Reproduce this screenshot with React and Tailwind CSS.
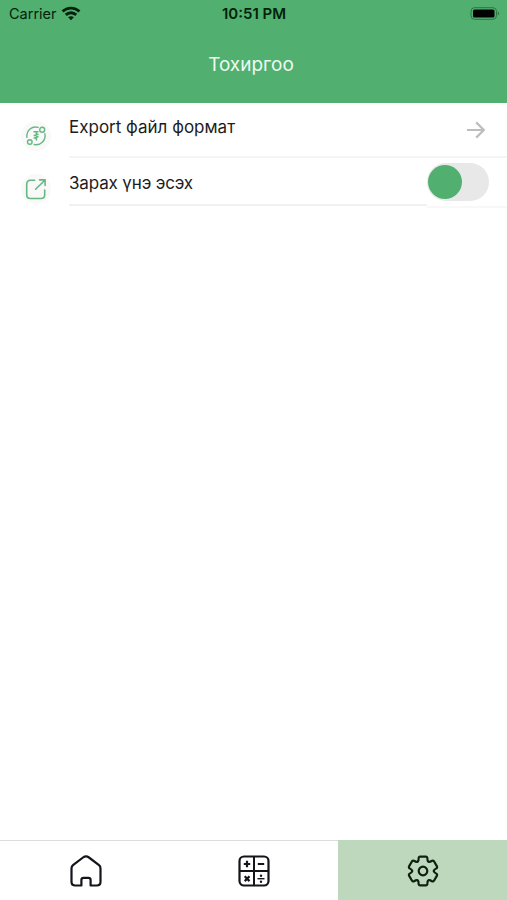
import { useState } from 'react';

const WifiIcon = () => (
  <svg width="20" height="15" viewBox="0 0 20 15" fill="none" stroke="#04210c" strokeWidth="2.9">
    <path d="M1.6 5.6C6.2 0.9 13.8 0.9 18.4 5.6" />
    <path d="M4.8 8.9C7.7 6 12.3 6 15.2 8.9" />
    <path d="M10 14.3L7.1 11.3C8.8 9.9 11.2 9.9 12.9 11.3Z" fill="#04210c" stroke="none" />
  </svg>
);

const BatteryIcon = () => (
  <svg width="30" height="14" viewBox="0 0 30 14">
    <rect x="1" y="0.7" width="25.5" height="11.6" rx="3.6" fill="none" stroke="#2b7541" strokeWidth="1" />
    <rect x="3" y="2.4" width="21.5" height="8.2" rx="1.6" fill="#000" />
    <path d="M27.8 4.6C29.6 5.2 29.6 7.8 27.8 8.4Z" fill="#2b7541" />
  </svg>
);

const CurrencyIcon = () => (
  <svg width="22" height="22" viewBox="0 0 22 22" fill="none" stroke="#66b883" strokeWidth="1.4" strokeLinecap="round">
    <circle cx="17.2" cy="4.8" r="2.5" />
    <circle cx="4.8" cy="17" r="2.3" />
    <path d="M13.2 2.4C7.2 0.6 1.2 5.2 1.9 12.4" />
    <path d="M19.9 8.8C21.2 15 15.8 20.8 9.2 19.5" />
    <path d="M9 6.8H13M11.4 6.8V15M9.3 10.5L13 9.2M9.3 13L13 11.7" strokeWidth="1.5" />
  </svg>
);

const ExportIcon = () => (
  <svg width="22" height="22" viewBox="0 0 22 22" fill="none" stroke="#66b883" strokeWidth="1.6" strokeLinecap="round" strokeLinejoin="round">
    <path d="M9.6 2.2H5.4C3.2 2.2 1.7 3.7 1.7 5.9V16.8C1.7 19 3.2 20.5 5.4 20.5H16C18.2 20.5 19.7 19 19.7 16.8V12" />
    <path d="M10.6 11.2L19.8 2.2M14.6 1.9H20.1V7.4" />
  </svg>
);

const ArrowIcon = () => (
  <svg width="20" height="18" viewBox="0 0 20 18" fill="none" stroke="#bdbdbd" strokeWidth="2.2">
    <path d="M1 9H17.5M10.2 1.4L17.8 9L10.2 16.6" />
  </svg>
);

const HomeIcon = () => (
  <svg className="ml-0.5" width="32" height="32" viewBox="0 0 32 32" fill="none" stroke="#15141a" strokeWidth="2.2" strokeLinejoin="round">
    <path d="M5.3 30.5C3 30.5 1.5 29 1.5 26.7V13.4C1.5 12 2 11 3 10.2L13 2.5C14.9 1.1 17.1 1.1 19 2.5L29 10.2C30 11 30.5 12 30.5 13.4V26.7C30.5 29 29 30.5 26.7 30.5H20.6V25C20.6 23.6 19.8 22.8 18.4 22.8H13.6C12.2 22.8 11.4 23.6 11.4 25V30.5Z" />
  </svg>
);

const CalculatorIcon = () => (
  <svg width="32" height="32" viewBox="0 0 32 32" fill="none" stroke="#15141a" strokeWidth="2.2">
    <rect x="1.5" y="1.5" width="29" height="29" rx="4.5" />
    <path d="M16 1.5V30.5M1.5 16H30.5" strokeWidth="2" />
    <path d="M5.8 9H12.2M9 5.8V12.2M19.8 9H26.2" />
    <path d="M6.7 21.3L11.5 26.1M11.5 21.3L6.7 26.1" />
    <path d="M19.5 23.7H26.5" strokeWidth="1.4" />
    <circle cx="23" cy="20.7" r="1.2" fill="#15141a" stroke="none" />
    <circle cx="23" cy="26.7" r="1.2" fill="#15141a" stroke="none" />
  </svg>
);

const GearIcon = () => (
  <svg width="32" height="32" viewBox="-16 -16 32 32" fill="none" stroke="#10200f" strokeWidth="2.2" strokeLinecap="round">
    {[0, 60, 120, 180, 240, 300].map((angle) => (
      <path
        key={angle}
        transform={`rotate(${angle})`}
        d="M-5.4 -9.35C-4.2 -10.1 -4.3 -11.2 -4.4 -12.4Q-4.5 -14.4 -2.7 -14.4L2.7 -14.4Q4.5 -14.4 4.4 -12.4C4.3 -11.2 4.2 -10.1 5.4 -9.35"
      />
    ))}
    <circle r="4.3" />
  </svg>
);

const tabs = [
  { id: 'home', Icon: HomeIcon },
  { id: 'calculator', Icon: CalculatorIcon },
  { id: 'settings', Icon: GearIcon },
];

export default function App() {
  const [activeTab, setActiveTab] = useState('settings');
  const [showPrice, setShowPrice] = useState(false);

  return (
    <div className="flex h-screen w-full flex-col bg-white font-['Inter','Noto_Sans',sans-serif] text-[#1c1c1e]">
      <header className="flex h-[103px] shrink-0 flex-col bg-[#51b06f]">
        {/* Status bar */}
        <div className="grid h-[27px] grid-cols-3 items-center pl-[9px] pr-[7px] text-[#04210c]">
          <div className="flex items-center gap-[4px]">
            <span className="text-[14.5px]">Carrier</span>
            <WifiIcon />
          </div>
          <span className="-ml-px pt-0.5 text-center text-[15px] font-semibold">10:51 PM</span>
          <div className="flex justify-end">
            <BatteryIcon />
          </div>
        </div>
        <h1 className="mt-6 pr-[5px] text-center text-[19px] leading-7 text-[#ecfaf0]">Тохиргоо</h1>
      </header>

      <main className="flex-1">
        <div className="flex h-[54px]">
          <div className="flex w-[69px] shrink-0 pl-[21px] pt-[18px]">
            <div className="flex size-[30px] items-center justify-center rounded-full bg-[#f8f9f8]">
              <CurrencyIcon />
            </div>
          </div>
          <div className="flex h-[55px] flex-1 justify-between border-b-2 border-[#f5f5f5] pr-[21px]">
            <span className="pt-[12px] text-[17px] leading-6">Export файл формат</span>
            <div className="pt-[18px]">
              <ArrowIcon />
            </div>
          </div>
        </div>

        <div className="flex h-[51px]">
          <div className="flex w-[69px] shrink-0 pl-[21px] pt-[17px]">
            <div className="flex size-[30px] items-center justify-center rounded-full bg-[#f8f9f8]">
              <ExportIcon />
            </div>
          </div>
          <div className="flex h-[49px] flex-1 border-b-2 border-[#f1f1f1]">
            <span className="pt-[14px] text-[17px] leading-6 tracking-[-0.15px]">Зарах үнэ эсэх</span>
          </div>
          <div className="w-20 shrink-0 border-b-2 border-[#f8f8f8] pt-[6px]">
            <button
              onClick={() => setShowPrice(!showPrice)}
              className={`flex h-[38px] w-[62px] items-center rounded-full bg-[#e8e8e8] px-[1px] ${showPrice ? 'justify-end' : 'justify-start'}`}
            >
              <span className="size-[34px] rounded-full bg-[#51b06f]"></span>
            </button>
          </div>
        </div>
      </main>

      <nav className="grid h-[60px] shrink-0 grid-cols-3">
        {tabs.map(({ id, Icon }) => (
          <button
            key={id}
            onClick={() => setActiveTab(id)}
            className={`flex items-center justify-center border-t pl-px pt-px ${
              activeTab === id ? 'border-[#bdd8bd] bg-[#bdd8bd]' : 'border-[#dcdcdc]'
            }`}
          >
            <Icon />
          </button>
        ))}
      </nav>
    </div>
  );
}
